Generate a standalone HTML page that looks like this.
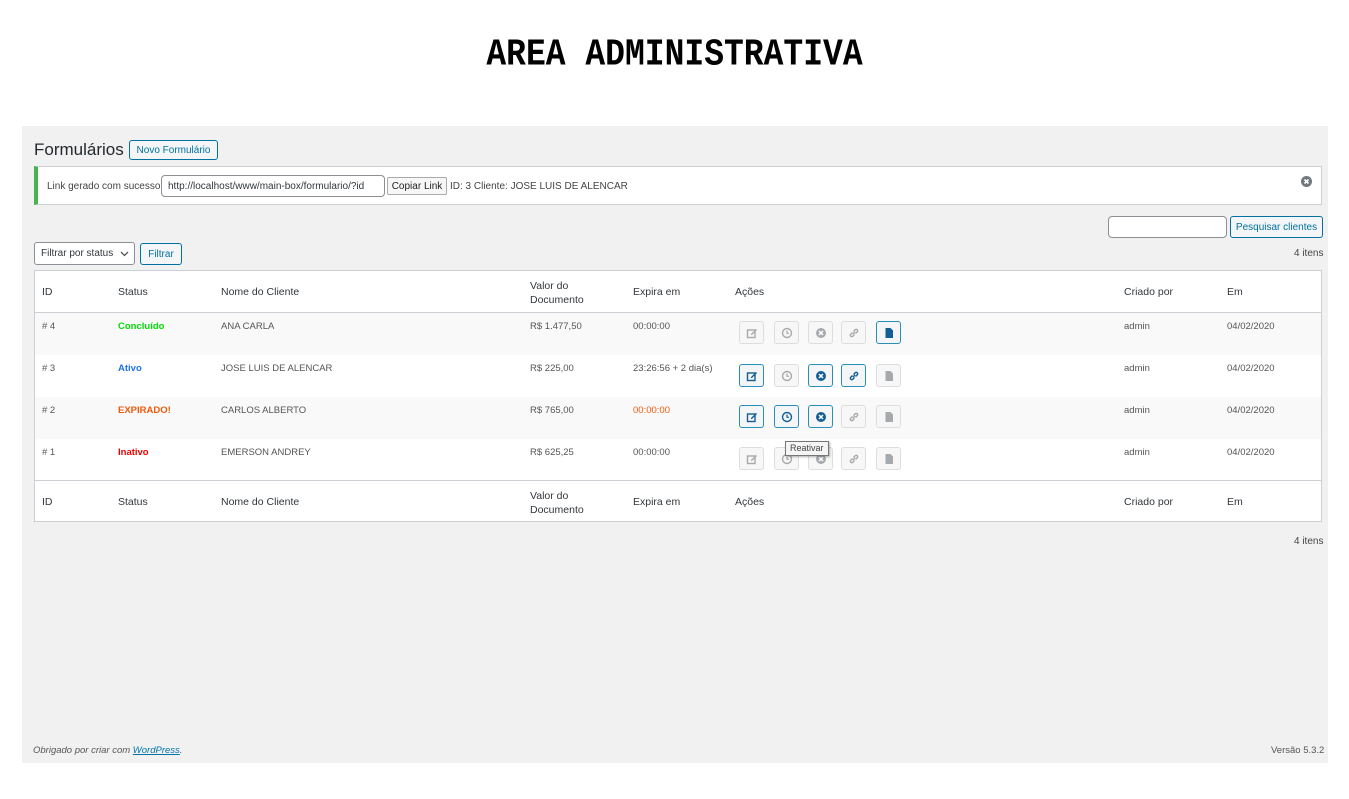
<!DOCTYPE html>
<html><head><meta charset="utf-8"><style>
*{box-sizing:border-box;margin:0;padding:0}
body{width:1349px;height:799px;background:#fff;font-family:"Liberation Sans",sans-serif;color:#444;font-size:10px;position:relative;overflow:hidden}
.a{position:absolute;white-space:nowrap}
h1{position:absolute;left:0;width:1349px;top:36px;text-align:center;font:bold 33px "Liberation Mono",monospace;color:#000;transform:scaleY(1.15)}
#wrap{position:absolute;left:22px;top:126px;width:1306px;height:637px;background:#f1f1f1}
.btn{position:absolute;border:1px solid #0071a1;color:#0071a1;background:#f3f5f6;border-radius:3px;font-size:10px;display:flex;align-items:center;justify-content:center}
.tbl{position:absolute;left:34px;top:270px;width:1288px;height:252px;border:1px solid #ccd0d4;background:#fff}
.row{position:absolute;left:0;width:1286px;height:42px}
.ib{position:absolute;width:25px;height:23px;border-radius:3px}
.on{border:1.5px solid #2a8fb8;background:#f3f5f6}
.off{border:1px solid #ddd;background:#f7f7f7}
.ib svg{position:absolute;left:6px;top:5px}
</style></head><body>
<h1>AREA ADMINISTRATIVA</h1>
<div id="wrap"></div>
<div class="a" style="left:34px;top:140px;font-size:17px;color:#23282d">Formulários</div>
<div class="btn" style="left:129px;top:140px;width:89px;height:20px">Novo Formulário</div>
<div class="a" style="left:34px;top:166px;width:1288px;height:39px;background:#fff;border:1px solid #ccd0d4;border-left:4px solid #46b450"></div>
<div class="a" style="left:47px;top:181px">Link gerado com sucesso:</div>
<div class="a" style="left:161px;top:175px;width:224px;height:22px;border:1px solid #8c8f94;border-radius:4px;background:#fff;padding:5px 6px;overflow:hidden;color:#32373c">http://localhost/www/main-box/formulario/?id</div>
<div class="a" style="left:387px;top:177px;width:60px;height:18px;border:1px solid #aaa;background:#f7f7f7;border-radius:2px;color:#222;display:flex;align-items:center;justify-content:center">Copiar Link</div>
<div class="a" style="left:450px;top:181px">ID: 3 Cliente: JOSE LUIS DE ALENCAR</div>
<svg class="a" style="left:1301px;top:176px" width="11" height="11" viewBox="0 0 11 11"><circle cx="5.5" cy="5.5" r="5.5" fill="#72777c"/><path d="M3.5 3.5l4 4M7.5 3.5l-4 4" stroke="#fff" stroke-width="1.6"/></svg>
<div class="a" style="left:1108px;top:216px;width:119px;height:22px;border:1px solid #8c8f94;border-radius:4px;background:#fff"></div>
<div class="btn" style="left:1230px;top:216px;width:93px;height:22px">Pesquisar clientes</div>
<div class="a" style="left:1294px;top:248px">4 itens</div>
<div class="a" style="left:34px;top:242px;width:101px;height:23px;border:1px solid #8c8f94;border-radius:3px;background:#fff;padding:5px 6px;color:#32373c">Filtrar por status</div>
<svg class="a" style="left:120px;top:251px" width="9" height="6"><path d="M1 1l3.5 3.5L8 1" stroke="#555" fill="none" stroke-width="1.3"/></svg>
<div class="btn" style="left:140px;top:243px;width:42px;height:22px">Filtrar</div>
<div class="tbl">
<div class="row" style="top:0;border-bottom:1px solid #ccd0d4"></div>
<div class="row" style="top:42px;background:#f9f9f9"></div>
<div class="row" style="top:126px;background:#f9f9f9"></div>
<div class="row" style="top:209px;border-top:1px solid #ccd0d4"></div>
</div>
<div style="position:absolute;left:0;top:0;font-size:10.5px;color:#32373c">
<div class="a" style="left:42px;top:286px">ID</div><div class="a" style="left:118px;top:286px">Status</div><div class="a" style="left:221px;top:286px">Nome do Cliente</div><div class="a" style="left:530px;top:279px;line-height:14px">Valor do<br>Documento</div><div class="a" style="left:633px;top:286px">Expira em</div><div class="a" style="left:735px;top:286px">Ações</div><div class="a" style="left:1124px;top:286px">Criado por</div><div class="a" style="left:1227px;top:286px">Em</div>
<div class="a" style="left:42px;top:496px">ID</div><div class="a" style="left:118px;top:496px">Status</div><div class="a" style="left:221px;top:496px">Nome do Cliente</div><div class="a" style="left:530px;top:489px;line-height:14px">Valor do<br>Documento</div><div class="a" style="left:633px;top:496px">Expira em</div><div class="a" style="left:735px;top:496px">Ações</div><div class="a" style="left:1124px;top:496px">Criado por</div><div class="a" style="left:1227px;top:496px">Em</div>
</div>
<div style="position:absolute;left:0;top:0;font-size:9.5px;color:#555">
<div class="a" style="left:42px;top:321px"># 4</div><div class="a" style="left:118px;top:321px;color:#00dd00;font-weight:bold">Concluído</div><div class="a" style="left:221px;top:321px">ANA CARLA</div><div class="a" style="left:530px;top:321px">R$ 1.477,50</div><div class="a" style="left:633px;top:321px">00:00:00</div><div class="a" style="left:1124px;top:321px">admin</div><div class="a" style="left:1227px;top:321px">04/02/2020</div>
<div class="a" style="left:42px;top:363px"># 3</div><div class="a" style="left:118px;top:363px;color:#1e73e8;font-weight:bold">Ativo</div><div class="a" style="left:221px;top:363px">JOSE LUIS DE ALENCAR</div><div class="a" style="left:530px;top:363px">R$ 225,00</div><div class="a" style="left:633px;top:363px">23:26:56 + 2 dia(s)</div><div class="a" style="left:1124px;top:363px">admin</div><div class="a" style="left:1227px;top:363px">04/02/2020</div>
<div class="a" style="left:42px;top:405px"># 2</div><div class="a" style="left:118px;top:405px;color:#f05a0a;font-weight:bold">EXPIRADO!</div><div class="a" style="left:221px;top:405px">CARLOS ALBERTO</div><div class="a" style="left:530px;top:405px">R$ 765,00</div><div class="a" style="left:633px;top:405px;color:#f05a0a">00:00:00</div><div class="a" style="left:1124px;top:405px">admin</div><div class="a" style="left:1227px;top:405px">04/02/2020</div>
<div class="a" style="left:42px;top:447px"># 1</div><div class="a" style="left:118px;top:447px;color:#e00;font-weight:bold">Inativo</div><div class="a" style="left:221px;top:447px">EMERSON ANDREY</div><div class="a" style="left:530px;top:447px">R$ 625,25</div><div class="a" style="left:633px;top:447px">00:00:00</div><div class="a" style="left:1124px;top:447px">admin</div><div class="a" style="left:1227px;top:447px">04/02/2020</div>
</div>
<div id="btns"></div>
<script>
const ic={
e:c=>`<svg width="12" height="12" viewBox="0 0 12 12"><rect x="1.5" y="3" width="7.5" height="7.5" fill="none" stroke="${c}" stroke-width="1.4"/><path d="M5 7l5-5 1 1-5 5H5z" fill="${c}"/></svg>`,
c:c=>`<svg width="12" height="12" viewBox="0 0 12 12"><circle cx="6" cy="6" r="4.5" fill="none" stroke="${c}" stroke-width="1.4"/><path d="M6 3.5V6.3h2" fill="none" stroke="${c}" stroke-width="1.2"/></svg>`,
x:c=>`<svg width="12" height="12" viewBox="0 0 12 12"><circle cx="6" cy="6" r="5" fill="${c}"/><path d="M4 4l4 4M8 4l-4 4" stroke="#fff" stroke-width="1.5"/></svg>`,
l:c=>`<svg width="12" height="12" viewBox="0 0 12 12"><path d="M5 7l2-2M4.5 5.5l-2 2a1.5 1.5 0 002 2l2-2M7.5 6.5l2-2a1.5 1.5 0 00-2-2l-2 2" fill="none" stroke="${c}" stroke-width="1.4"/></svg>`,
d:c=>`<svg width="12" height="12" viewBox="0 0 12 12"><path d="M2.5 1h5l2.5 2.5V11h-7.5z" fill="${c}"/></svg>`};
const xs=[739,774,808,841,876],ks=['e','c','x','l','d'];
const st=[[0,0,0,0,1],[1,0,1,1,0],[1,1,1,0,0],[0,0,0,0,0]];
let h='';
st.forEach((r,i)=>r.forEach((on,j)=>{const y=321+i*42+(i==1?1:0);h+=`<div class="ib ${on?'on':'off'}" style="left:${xs[j]}px;top:${y}px">${ic[ks[j]](on?'#135e96':'#a7aaad')}</div>`;}));
document.getElementById('btns').innerHTML=h;
</script>
<div class="a" style="left:785px;top:441px;height:15px;padding:1px 4px;background:#f5f5f5;border:1px solid #767676;font-size:9px;color:#444;box-shadow:1px 1px 2px rgba(0,0,0,.3)">Reativar</div>
<div class="a" style="left:1294px;top:536px">4 itens</div>
<div class="a" style="left:33px;top:745px;font-style:italic;color:#555;font-size:9.5px">Obrigado por criar com <span style="color:#0073aa;text-decoration:underline">WordPress</span>.</div>
<div class="a" style="left:1271px;top:745px;color:#555;font-size:9.5px">Versão 5.3.2</div>
</body></html>
